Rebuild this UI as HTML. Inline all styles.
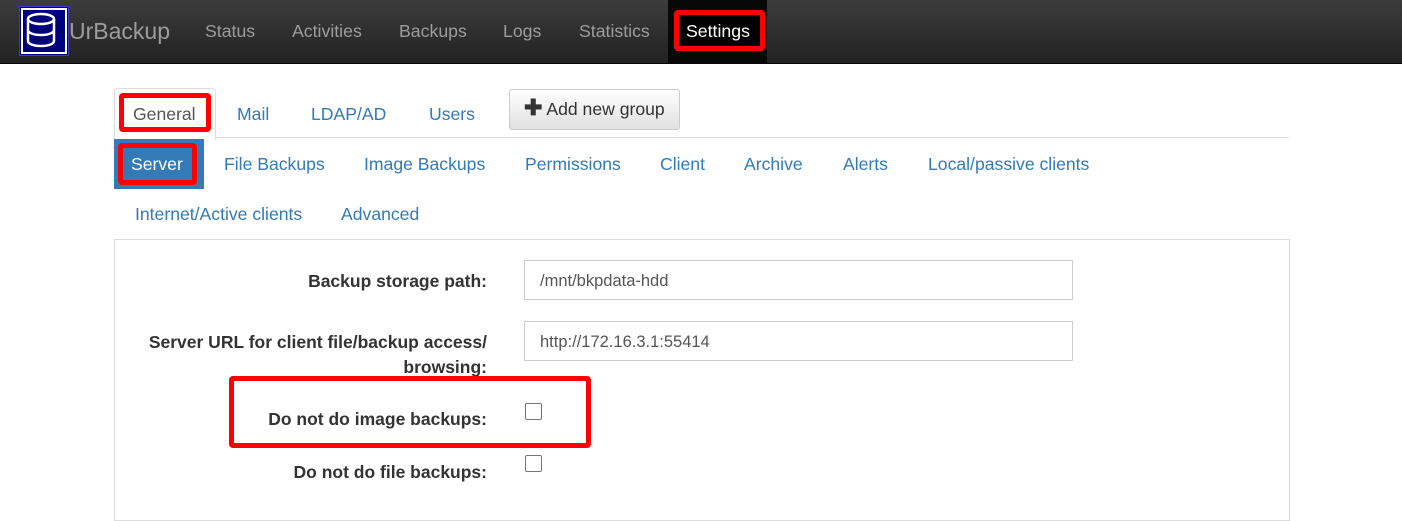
<!DOCTYPE html>
<html><head><style>
body{margin:0;width:1402px;height:503px;overflow:hidden;background:#fff;font-family:"Liberation Sans",sans-serif;position:relative}
.a{position:absolute;white-space:nowrap}
.nav{position:absolute;left:0;top:0;width:1402px;height:63px;background:linear-gradient(#3c3c3c,#222);border-bottom:1px solid #080808}
.nv{color:#9d9d9d;font-size:17.7px;top:21px}
.lnk{color:#337ab7;font-size:17.6px}
.lbl{font-weight:bold;font-size:17.5px;color:#333;text-align:right;width:370px;left:117px}
.inp{border:1px solid #ccc;height:40px;left:524px;font-size:16.5px;color:#555;line-height:40px;padding-left:15px;box-sizing:border-box;width:549px}
.cb{width:15px;height:15px;border:1px solid #767676;border-radius:2px;left:525px;background:#fff}
.red{border:5px solid #f00;border-radius:4px;box-sizing:border-box}
</style></head><body>
<div class="nav"></div>
<svg class="a" style="left:19px;top:6px" width="50" height="50" viewBox="0 0 50 50"><rect x="0" y="0" width="50" height="50" fill="#00007a" stroke="#3a3ad0" stroke-width="2"/><rect x="3" y="3" width="44" height="44" fill="none" stroke="#fff" stroke-width="2"/><g fill="none" stroke="#fff" stroke-width="2.5"><ellipse cx="22" cy="13" rx="13" ry="5"/><path d="M9 13v22c0 3 6 5 13 5s13-2 13-5V13M9 24c0 3 6 5 13 5s13-2 13-5"/></g></svg>
<div class="a" style="left:69px;top:18px;font-size:23px;color:#9d9d9d">UrBackup</div>
<div class="a nv" style="left:205px">Status</div>
<div class="a nv" style="left:292px">Activities</div>
<div class="a nv" style="left:399px">Backups</div>
<div class="a nv" style="left:503px">Logs</div>
<div class="a nv" style="left:579px">Statistics</div>
<div class="a" style="left:668px;top:0;width:99px;height:63px;background:#080808"></div>
<div class="a red" style="left:674px;top:10px;width:91px;height:41px;background:#000"></div>
<div class="a" style="left:686px;top:21px;font-size:17.7px;color:#fff">Settings</div>

<div class="a" style="left:115px;top:137px;width:1174px;border-top:1px solid #ddd"></div>
<div class="a" style="left:114px;top:88px;width:100px;height:50px;border:1px solid #ddd;border-bottom:1px solid #fff;background:#fff;border-radius:4px 4px 0 0"></div>
<div class="a red" style="left:119px;top:93px;width:92px;height:39px"></div>
<div class="a" style="left:133px;top:104px;font-size:17.6px;color:#555">General</div>
<div class="a lnk" style="left:237px;top:104px">Mail</div>
<div class="a lnk" style="left:311px;top:104px">LDAP/AD</div>
<div class="a lnk" style="left:429px;top:104px">Users</div>
<div class="a" style="left:509px;top:89px;width:171px;height:41px;border:1px solid #ccc;border-radius:3px;background:linear-gradient(#fff,#e0e0e0);box-sizing:border-box"></div>
<div class="a" style="left:524px;top:99px;font-size:17.6px;color:#333"><b style="font-size:22px;line-height:18px">✚</b> Add new group</div>

<div class="a" style="left:114px;top:139px;width:90px;height:50px;background:#337ab7"></div>
<div class="a red" style="left:118px;top:143px;width:79px;height:42px;background:#337ab7"></div>
<div class="a" style="left:131px;top:154px;font-size:17.6px;color:#fff">Server</div>
<div class="a lnk" style="left:224px;top:154px">File Backups</div>
<div class="a lnk" style="left:364px;top:154px">Image Backups</div>
<div class="a lnk" style="left:525px;top:154px">Permissions</div>
<div class="a lnk" style="left:660px;top:154px">Client</div>
<div class="a lnk" style="left:744px;top:154px">Archive</div>
<div class="a lnk" style="left:843px;top:154px">Alerts</div>
<div class="a lnk" style="left:928px;top:154px">Local/passive clients</div>
<div class="a lnk" style="left:135px;top:204px">Internet/Active clients</div>
<div class="a lnk" style="left:341px;top:204px">Advanced</div>

<div class="a" style="left:114px;top:239px;width:1174px;height:280px;border:1px solid #ddd"></div>
<div class="a lbl" style="top:271px">Backup storage path:</div>
<div class="a inp" style="top:260px">/mnt/bkpdata-hdd</div>
<div class="a lbl" style="top:330px;line-height:25px">Server URL for client file/backup access/<br>browsing:</div>
<div class="a inp" style="top:321px">http://172.16.3.1:55414</div>
<div class="a red" style="left:229px;top:376px;width:362px;height:72px"></div>
<div class="a lbl" style="top:409px">Do not do image backups:</div>
<div class="a cb" style="top:403px"></div>
<div class="a lbl" style="top:462px">Do not do file backups:</div>
<div class="a cb" style="top:455px"></div>
</body></html>
